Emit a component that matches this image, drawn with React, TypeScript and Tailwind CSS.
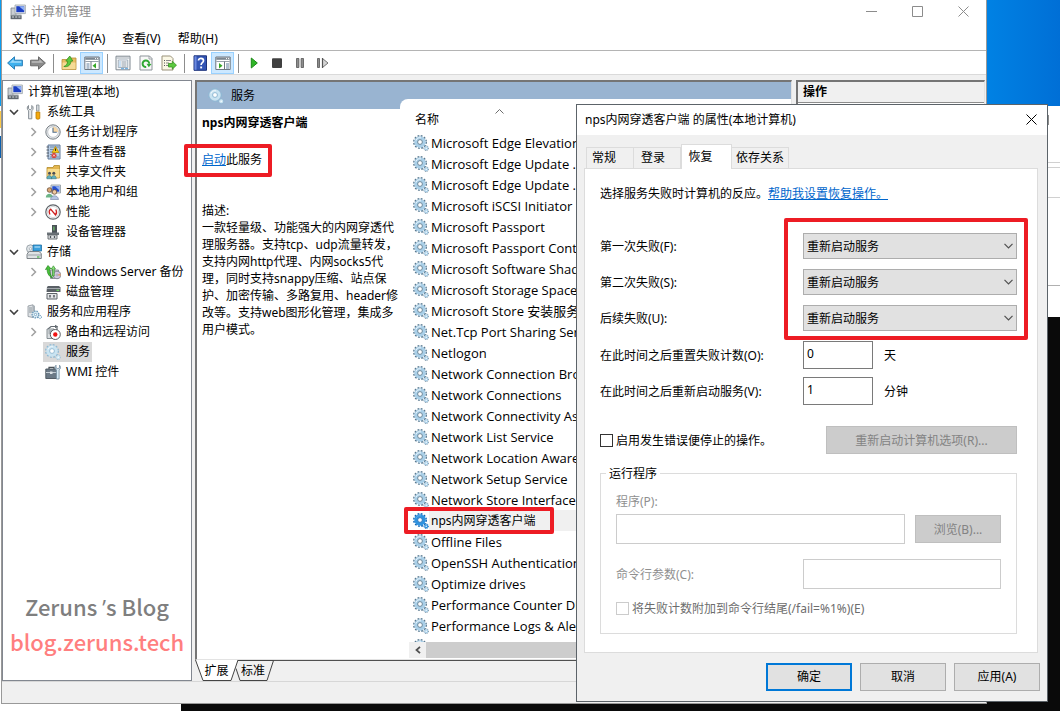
import type { ReactNode } from 'react'
import clsx from 'clsx'

const services = [
  'Microsoft Edge Elevation ...',
  'Microsoft Edge Update ...',
  'Microsoft Edge Update ...',
  'Microsoft iSCSI Initiator ...',
  'Microsoft Passport',
  'Microsoft Passport Cont...',
  'Microsoft Software Shad...',
  'Microsoft Storage Space...',
  'Microsoft Store 安装服务',
  'Net.Tcp Port Sharing Ser...',
  'Netlogon',
  'Network Connection Bro...',
  'Network Connections',
  'Network Connectivity Ass...',
  'Network List Service',
  'Network Location Aware...',
  'Network Setup Service',
  'Network Store Interface ...',
  'nps内网穿透客户端',
  'Offline Files',
  'OpenSSH Authentication ...',
  'Optimize drives',
  'Performance Counter DL...',
  'Performance Logs & Aler...',
  '',
]

const description = [
  '一款轻量级、功能强大的内网穿透代',
  '理服务器。支持tcp、udp流量转发，',
  '支持内网http代理、内网socks5代',
  '理，同时支持snappy压缩、站点保',
  '护、加密传输、多路复用、header修',
  '改等。支持web图形化管理，集成多',
  '用户模式。',
]

/* ---------- icons ---------- */

function Svg({ children, size = 16 }: { children: ReactNode; size?: number }) {
  return (
    <svg width={size} height={size} viewBox="0 0 16 16" fill="none" className="shrink-0" aria-hidden="true">
      {children}
    </svg>
  )
}

function GearIcon({ active = false, pale = false }: { active?: boolean; pale?: boolean }) {
  const edge = active ? '#0b62b4' : pale ? '#8db9d4' : '#58788f'
  const body = active ? '#2f93e0' : pale ? '#c9e4f2' : '#a9cfe8'
  return (
    <Svg>
      <circle cx="7" cy="7" r="6.2" stroke={edge} strokeWidth="1.500" strokeDasharray="1.800 1.446" />
      <circle cx="7" cy="7" r="4.100" stroke={body} strokeWidth="3.200" />
      <path d="M3 5.500A4.300 4.300 0 0 1 8 2.800" stroke="#fff" strokeWidth="1" strokeOpacity={active ? 0.2 : 0.7} />
      <circle cx="7" cy="7" r="2.400" fill="#fff" stroke={edge} strokeWidth=".9" />
      <circle cx="13.200" cy="13.200" r="2.300" stroke={edge} strokeWidth="1" strokeDasharray="1 .806" />
      <circle cx="13.200" cy="13.200" r="1.400" fill="#fff" stroke={body} strokeWidth="1.300" />
    </Svg>
  )
}

function ComputerIcon() {
  return (
    <Svg>
      <path d="M1 4h5v8H1z" fill="#c9ced3" stroke="#7b838a" strokeWidth=".8" />
      <path d="M5 1h10.400v8.600H5z" fill="#e4e7ea" stroke="#9aa3aa" strokeWidth=".8" />
      <path d="M6.300 2.200h7.900v6H6.300z" fill="#1b3fc4" />
      <path d="M9 2.200h5.200v4.600z" fill="#8fb0f5" />
      <path d="M2.500 10.500h9V12h-9z" fill="#a5acb2" />
      <path d="M.6 11.600h11v3.600H.6z" fill="#5f676e" />
      <path d="M2 13h2M5.200 13h2M8.400 13h2" stroke="#d8dde1" />
    </Svg>
  )
}

function ToolsIcon() {
  return (
    <Svg>
      <path d="M2.500 1.500v3l1.600 1.400L5.800 4.500V1.500C7.600 2.500 7.600 5.500 5.800 6.800v8h-3.200v-8C.8 5.500.8 2.500 2.500 1.500Z" fill="#e6e9eb" stroke="#7d858b" strokeWidth=".9" />
      <path d="M10.500 1h2.500v6h-2.500z" fill="#d5d9dc" stroke="#878f95" strokeWidth=".8" />
      <path d="M10 8h3.800v6.500c-1 .9-2.800.9-3.800 0z" fill="#f5a90d" stroke="#b97a00" strokeWidth=".8" />
    </Svg>
  )
}

function ClockIcon() {
  return (
    <Svg>
      <circle cx="8" cy="8" r="7.200" fill="#e3e6e8" stroke="#7a8187" strokeWidth="1" />
      <circle cx="8" cy="8" r="5.300" fill="#fff" stroke="#b3b9be" strokeWidth=".7" />
      <path d="M8 2.800A5.200 5.200 0 0 1 13.200 8H8z" fill="#f8d8a6" />
      <path d="M8 3.800V8.300h3.800" stroke="#4f6b87" strokeWidth="1.100" />
    </Svg>
  )
}

function EventIcon() {
  return (
    <Svg>
      <path d="M3 1h12v14H3z" fill="#b9cde4" stroke="#647d9b" />
      <path d="M5 3h9M5 5.500h4M5 8h3M5 10.500h3M5 13h9" stroke="#6f8cad" />
      <path d="M1.500 3h2.500M1.500 6h2.500M1.500 9h2.500M1.500 12h2.500" stroke="#555f6a" />
      <path d="m10.500 2.500 3.500 6H7z" fill="#f8c615" stroke="#b58600" strokeWidth=".7" />
      <path d="M10.500 4.500v2.400" stroke="#222" />
      <circle cx="9" cy="11.500" r="2.500" fill="#d83a32" />
      <path d="m8 10.500 2 2m0-2-2 2" stroke="#fff" strokeWidth=".8" />
    </Svg>
  )
}

function SharedFolderIcon() {
  return (
    <Svg>
      <path d="M2 3.500h6l1-2h5.500V14H2z" fill="#e3b64f" stroke="#b38a2a" strokeWidth=".8" />
      <path d="M2.500 5h12v8.600h-12z" fill="#f8dd8d" />
      <circle cx="4.500" cy="9.300" r="1.500" fill="#4a4f55" />
      <circle cx="8.800" cy="9.300" r="1.500" fill="#4a4f55" />
      <path d="M1.800 14.800c0-4.300 5-4.300 5 0zM6.300 14.800c0-4.300 5-4.300 5 0z" fill="#5fb0c0" stroke="#2f6f7d" strokeWidth=".5" />
    </Svg>
  )
}

function UsersIcon() {
  return (
    <Svg>
      <path d="M6 1h9.500v8H6z" fill="#dfe4e8" stroke="#8b959d" strokeWidth=".8" />
      <path d="M7.300 2.200h7v5.500h-7z" fill="#2550cf" />
      <path d="M10 2.200h4.300v4z" fill="#8fb0f5" />
      <circle cx="4.500" cy="6" r="2.300" fill="#d9a878" stroke="#5d4126" strokeWidth=".7" />
      <circle cx="9.500" cy="8" r="2.300" fill="#efc9a0" stroke="#5d4126" strokeWidth=".7" />
      <path d="M.8 13.500C1 8.500 7.500 8.500 8 13.500z" fill="#6cb587" />
      <path d="M5.500 15.500c.3-5 7.700-5 8 0z" fill="#b5c6e2" stroke="#5a6d93" strokeWidth=".5" />
    </Svg>
  )
}

function PerformanceIcon() {
  return (
    <Svg>
      <circle cx="8" cy="8" r="7.200" fill="#fff" stroke="#5f656a" strokeWidth="1.200" />
      <circle cx="8" cy="8" r="5.600" stroke="#d5d8da" />
      <path d="M5 10.500c-1.200-2.500-.8-4.500.6-5.300L10.500 11c1.200-1.500 1.300-3.700.3-5.500" stroke="#cf1f1f" strokeWidth="1.300" />
    </Svg>
  )
}

function DeviceIcon() {
  return (
    <Svg>
      <path d="M7 1h5v8H7z" fill="#4b5157" />
      <path d="M8.300 2.500h1.200v4H8.300z" fill="#6fc36b" />
      <path d="M2 8.500h12V11H2z" fill="#6b7278" />
      <path d="M3 11h9v4H3z" fill="#dfe2e4" stroke="#5d6368" strokeWidth=".9" />
      <path d="M5.500 12v2M9.500 12v2" stroke="#4b5157" strokeWidth="1.300" />
    </Svg>
  )
}

function StorageIcon() {
  return (
    <Svg>
      <circle cx="4.500" cy="4.800" r="4" fill="#dfe4e7" stroke="#8b959d" strokeWidth=".8" />
      <circle cx="4.500" cy="4.800" r="1.200" fill="#fff" stroke="#8b959d" strokeWidth=".6" />
      <path d="M7 1h8.500v6H7z" fill="#3aa0dd" stroke="#1f6fa5" strokeWidth=".8" />
      <path d="M8.500 3h5.500" stroke="#c8e8fa" />
      <path d="m2 8.500 1.500-1h9.500l2.300 2v5H1v-4z" fill="#dfe2e4" stroke="#70777d" strokeWidth=".9" />
      <path d="M1.500 11h13.500" stroke="#9aa1a7" />
      <path d="M11 13h2.500" stroke="#48b648" strokeWidth="1.200" />
    </Svg>
  )
}

function BackupIcon() {
  return (
    <Svg>
      <path d="M5.500 6h8v8.500h-8z" fill="#c8cdd1" stroke="#777f86" strokeWidth=".8" />
      <circle cx="12" cy="11" r="3.800" fill="#d7c9e6" stroke="#777f86" strokeWidth=".8" />
      <path d="M12 11 15.500 9.500 15.600 12z" fill="#e6a16a" />
      <circle cx="12" cy="11" r="1" fill="#fff" stroke="#666" strokeWidth=".5" />
      <path d="M7.500 14C3 12 2 8 2.200 5L.5 5.500 3 1.500l3 3.300-1.600.2c0 3 1 6 3.100 9Z" fill="#48c43a" stroke="#23821c" strokeWidth=".7" />
      <path d="M7.500 12V5L6.200 5 8.400 1.800 10.500 5H9.200v7z" fill="#8be07d" stroke="#23821c" strokeWidth=".6" />
    </Svg>
  )
}

function DiskIcon() {
  return (
    <Svg>
      <path d="m2 3 1-1h11l1.500 1.500V8H1.500z" fill="#5a6066" />
      <path d="M2 4.500h13" stroke="#a2a8ad" />
      <path d="M11.500 6.300h2.500" stroke="#6fe05e" strokeWidth="1.200" />
      <path d="M2 9.500h10V15H2z" fill="#e3e5e7" stroke="#5d6368" strokeWidth="1" />
      <path d="M5 11v2.500M9 11v2.500" stroke="#4b5157" strokeWidth="1.400" />
    </Svg>
  )
}

function AppsIcon() {
  return (
    <Svg>
      <path d="m2 2 5-1.200V13.500L2 12.500z" fill="#dfe3e6" stroke="#8a9299" strokeWidth=".8" />
      <path d="M7 .8 9 2v11l-2 .5z" fill="#aab2b8" />
      <path d="M3 4h3M3 6h3M3 8h3" stroke="#858d93" strokeWidth=".9" />
      <circle cx="9.500" cy="10.500" r="3.300" fill="#e6f3fa" stroke="#6a9aba" strokeWidth="1.500" strokeDasharray="1.400 .9" />
      <circle cx="9.500" cy="10.500" r="1.200" fill="#fff" stroke="#6a9aba" strokeWidth=".8" />
      <circle cx="14" cy="13" r="1.600" fill="#e6f3fa" stroke="#6a9aba" strokeDasharray="1 .7" />
    </Svg>
  )
}

function RoutingIcon() {
  return (
    <Svg>
      <path d="m3 5 3-2.500h6V6" stroke="#62696f" strokeWidth="1.200" />
      <path d="M2 5h7v9.500H2z" fill="#dadee1" stroke="#7b8389" strokeWidth=".9" />
      <path d="M3.500 7h4M3.500 9h3" stroke="#7b8389" />
      <path d="m10 .8 3 1.700-3 1.700z" fill="#62696f" />
      <circle cx="10.300" cy="10.500" r="5" fill="#fff" stroke="#4a4f54" strokeWidth=".9" />
      <circle cx="10.300" cy="10.500" r="2.200" fill="#f01414" />
    </Svg>
  )
}

function WmiIcon() {
  return (
    <Svg>
      <path d="M4 5V3.300h5V5" stroke="#495158" strokeWidth="1.200" />
      <path d="M.8 5h11l1.500 3v6.500H.8z" fill="#6c7a87" stroke="#48525b" strokeWidth=".9" />
      <path d="M1 8.500h11" stroke="#c5ced5" />
      <path d="M5 7.500h2.500v2.500H5z" fill="#dde3e7" />
      <path d="M11 1.200c-1.500 1.300-1.300 3.800.4 4.600V15h2.700V5.800c1.700-.8 1.900-3.300.4-4.600v2.600l-1.700.9L11 3.800z" fill="#d7eaf5" stroke="#6d8799" strokeWidth=".8" />
    </Svg>
  )
}

function BackIcon() {
  return (
    <Svg>
      <path d="M.6 8 7.500 1.800v3.400h7.900v5.600H7.500v3.400z" fill="#3eb1ee" stroke="#2b7fb8" />
      <path d="M2.800 7.800 6.600 4.300v2h7.700v1.500z" fill="#a3dcfa" />
    </Svg>
  )
}

function ForwardIcon() {
  return (
    <Svg>
      <path d="M15.400 8 8.500 1.800v3.400H.6v5.600h7.900v3.400z" fill="#8b8b8b" stroke="#6a6a6a" />
      <path d="M13.200 7.800 9.400 4.300v2H1.700v1.500z" fill="#bdbdbd" />
    </Svg>
  )
}

function UpFolderIcon() {
  return (
    <Svg>
      <path d="M1 4.500h5l1.500-1.500H15v11.500H1z" fill="#e8bd62" stroke="#b98f38" strokeWidth=".8" />
      <path d="M1.500 7.500h13v6.600h-13z" fill="#f6db96" />
      <path d="M2.800 11.500c2.400-.8 3.700-2.600 3.900-5.200L4.800 6 8.800 1l3 5-1.900.3c-.2 3.900-3 6-7.100 5.200Z" fill="#5cc93f" stroke="#2d8a1a" strokeWidth=".7" />
    </Svg>
  )
}

function PaneIcon({ flip = false }: { flip?: boolean }) {
  return (
    <Svg>
      <path d="M.8 2h14.400v12.500H.8z" fill="#fff" stroke="#6d7780" />
      <path d="M1.300 2.500h13.400v2.300H1.300z" fill="#7c8791" />
      <path d="M11 3.600h1M13 3.600h1" stroke="#fff" />
      <path d="M1.300 6.500h13.400" stroke="#9aa4ad" />
      {flip ? (
        <>
          <path d="M9.500 6.500v8" stroke="#6d7780" />
          <path d="M11 9h3M11 11h3M11 13h3" stroke="#60809f" />
          <path d="m4 8 3.500 2.700L4 13.500z" fill="#35a825" />
        </>
      ) : (
        <>
          <path d="M7 6.500v8" stroke="#6d7780" />
          <path d="M2.500 9h3M2.500 11h3M2.500 13h3" stroke="#60809f" />
          <path d="m12 8-3.500 2.700L12 13.500z" fill="#35a825" />
        </>
      )}
    </Svg>
  )
}

function PropertiesIcon() {
  return (
    <Svg>
      <path d="M1 1.200h14v13.600H1z" fill="#f5f6f7" stroke="#7f8890" />
      <path d="M1.500 3h13" stroke="#a6afb7" />
      <path d="M3.300 5h9.400v7.500H3.300z" fill="#fff" stroke="#8fa0af" strokeWidth=".8" />
      <path d="M4.500 7h1M4.500 9h1M4.500 11h1" stroke="#2f83cc" />
      <path d="M6.500 7H11.500M6.500 9h5M6.500 11h5" stroke="#8a97a3" />
      <path d="M6 13.700h3M10 13.700h3" stroke="#5ba3dd" />
    </Svg>
  )
}

function RefreshIcon() {
  return (
    <Svg>
      <path d="M2 1h9.500L14 3.500V15H2z" fill="#f8f8f8" stroke="#8e959b" />
      <path d="M11 1v3h3" stroke="#8e959b" strokeWidth=".8" />
      <path d="M8.200 12A3.300 3.300 0 1 1 11.200 8.800" stroke="#2fa833" strokeWidth="2" />
      <path d="m8.500 8.700 5 .2-2.700 3.400z" fill="#2fa833" />
    </Svg>
  )
}

function ExportIcon() {
  return (
    <Svg>
      <path d="M1 1h8.500L12 3.500V15H1z" fill="#fbf8e6" stroke="#9a927a" />
      <path d="M3 5.500h1M3 8h1M3 10.500h1" stroke="#555" />
      <path d="M5 5.500h5M5 8h3M5 10.500h3" stroke="#8b8b8b" />
      <path d="M7.500 8.500h3.800V6.200l4.200 4-4.200 4V12H7.500z" fill="#5cc93f" stroke="#2d8a1a" strokeWidth=".7" />
    </Svg>
  )
}

function HelpIcon() {
  return (
    <Svg>
      <path d="M2 .8h12.500v14.500H2z" fill="#3355b5" stroke="#1d337b" />
      <path d="M2.500 1.300h2v13.500h-2z" fill="#6d8ae0" />
      <path d="M6.500 5.600c0-3 5-3 5 .1 0 2-2.400 2-2.400 4.200" stroke="#fff" strokeWidth="1.700" />
      <path d="M8.200 11.500h1.900v1.900H8.200z" fill="#fff" />
    </Svg>
  )
}

function PlayIcon() {
  return (
    <Svg>
      <path d="m5.300 3 6 5-6 5z" fill="#2fb526" stroke="#1c8a17" />
    </Svg>
  )
}

function StopIcon() {
  return (
    <Svg>
      <rect x="3" y="3.200" width="10" height="9.800" rx="1" fill="#404040" />
    </Svg>
  )
}

function PauseIcon() {
  return (
    <Svg>
      <path d="M4.500 3.500h2.400v9H4.500zM9.100 3.500h2.400v9H9.100z" fill="#8c8c8c" stroke="#555" strokeWidth=".8" />
    </Svg>
  )
}

function RestartIcon() {
  return (
    <Svg>
      <path d="M2.500 3.500h2v9h-2z" fill="#8c8c8c" stroke="#555" strokeWidth=".8" />
      <path d="m7.500 3.500 5.500 4.500-5.500 4.500z" fill="#d4d4d4" stroke="#666" strokeWidth=".9" />
      <path d="M7.500 3v10" stroke="#555" strokeWidth="1.200" />
    </Svg>
  )
}

function CloseIcon({ className }: { className: string }) {
  return (
    <svg width="11" height="11" viewBox="0 0 11 11" className={className} aria-hidden="true">
      <path d="M.5.5l10 10m0-10-10 10" stroke="currentColor" />
    </svg>
  )
}

/* ---------- main window ---------- */

const menus = ['文件(F)', '操作(A)', '查看(V)', '帮助(H)']

function Separator() {
  return (
    <div className="flex h-[22px] w-2 items-center justify-center">
      <div className="h-[19px] w-px bg-[#8d8d8d]" />
    </div>
  )
}

function ToolButton({ label, on = false, children }: { label: string; on?: boolean; children: ReactNode }) {
  return (
    <button
      aria-label={label}
      className={clsx('flex h-[22px] w-[23px] items-center justify-center', on && 'border border-[#99d1ff] bg-[#cce8ff]')}
    >
      {children}
    </button>
  )
}

function Toolbar() {
  return (
    <div className="flex h-6 shrink-0 items-end border-b border-[#dadada] bg-white pl-px">
      <ToolButton label="后退"><BackIcon /></ToolButton>
      <ToolButton label="前进"><ForwardIcon /></ToolButton>
      <Separator />
      <ToolButton label="上一级"><UpFolderIcon /></ToolButton>
      <ToolButton label="控制台树" on><PaneIcon /></ToolButton>
      <Separator />
      <ToolButton label="属性"><PropertiesIcon /></ToolButton>
      <ToolButton label="刷新"><RefreshIcon /></ToolButton>
      <ToolButton label="导出列表"><ExportIcon /></ToolButton>
      <Separator />
      <ToolButton label="帮助"><HelpIcon /></ToolButton>
      <ToolButton label="操作窗格" on><PaneIcon flip /></ToolButton>
      <Separator />
      <ToolButton label="启动服务"><PlayIcon /></ToolButton>
      <ToolButton label="停止服务"><StopIcon /></ToolButton>
      <ToolButton label="暂停服务"><PauseIcon /></ToolButton>
      <ToolButton label="重启服务"><RestartIcon /></ToolButton>
    </div>
  )
}

interface Node {
  label: string
  icon: ReactNode
  level: 0 | 1 | 2
  state?: 'open' | 'closed'
  selected?: boolean
}

const tree: Node[] = [
  { label: '计算机管理(本地)', icon: <ComputerIcon />, level: 0 },
  { label: '系统工具', icon: <ToolsIcon />, level: 1, state: 'open' },
  { label: '任务计划程序', icon: <ClockIcon />, level: 2, state: 'closed' },
  { label: '事件查看器', icon: <EventIcon />, level: 2, state: 'closed' },
  { label: '共享文件夹', icon: <SharedFolderIcon />, level: 2, state: 'closed' },
  { label: '本地用户和组', icon: <UsersIcon />, level: 2, state: 'closed' },
  { label: '性能', icon: <PerformanceIcon />, level: 2, state: 'closed' },
  { label: '设备管理器', icon: <DeviceIcon />, level: 2 },
  { label: '存储', icon: <StorageIcon />, level: 1, state: 'open' },
  { label: 'Windows Server 备份', icon: <BackupIcon />, level: 2, state: 'closed' },
  { label: '磁盘管理', icon: <DiskIcon />, level: 2 },
  { label: '服务和应用程序', icon: <AppsIcon />, level: 1, state: 'open' },
  { label: '路由和远程访问', icon: <RoutingIcon />, level: 2, state: 'closed' },
  { label: '服务', icon: <GearIcon pale />, level: 2, selected: true },
  { label: 'WMI 控件', icon: <WmiIcon />, level: 2 },
]

function TreeRow({ node }: { node: Node }) {
  return (
    <li className={clsx('flex h-5 items-center', node.level === 0 && 'pl-[2px]', node.level === 1 && 'pl-1', node.level === 2 && 'pl-[23px]')}>
      {node.level > 0 && (
        <span className="mr-[3px] flex w-[14px] justify-center">
          {node.state === 'open' && (
            <svg width="10" height="7" viewBox="0 0 10 7" fill="none"><path d="m1 1 4 4 4-4" stroke="#404040" strokeWidth="1.600" /></svg>
          )}
          {node.state === 'closed' && (
            <svg width="7" height="10" viewBox="0 0 7 10" fill="none"><path d="m1.500 1 4 4-4 4" stroke="#a0a0a0" strokeWidth="1.500" /></svg>
          )}
        </span>
      )}
      <span className={clsx('flex h-5 items-center gap-[5px] px-[2px] whitespace-nowrap', node.selected && 'bg-[#d9d9d9]')}>
        {node.icon}
        {node.label}
      </span>
    </li>
  )
}

function TreePanel() {
  return (
    <nav className="flex w-[190px] shrink-0 flex-col justify-between overflow-hidden border border-[#828790] bg-white">
      <ul className="pt-px">
        {tree.map(node => <TreeRow key={node.label} node={node} />)}
      </ul>
      <div className="pb-[22px] text-center font-['Noto_Sans_CJK_SC',sans-serif] text-[22px] leading-[34px] font-medium">
        <p className="text-[#7f7f7f]">Zeruns <span className="font-['Open_Sans']">’</span>s Blog</p>
        <p className="text-[#ff7f7f]">blog.zeruns.tech</p>
      </div>
    </nav>
  )
}

function ServiceInfo() {
  return (
    <section className="w-[203px] shrink-0">
      <h2 className="flex h-[27px] items-center gap-[7px] bg-[#99b4d1] pl-[11px]">
        <GearIcon pale />
        服务
      </h2>
      <div className="pt-[5px] pl-[5px] leading-[17px] whitespace-nowrap">
        <h3 className="font-bold">nps内网穿透客户端</h3>
        <p className="relative mt-5">
          <a href="#start" className="text-[#0066cc] underline">启动</a>此服务
          <span className="absolute -top-[7px] -left-[18px] h-[33px] w-[88px] rounded-xs border-4 border-[#ed1c24]" />
        </p>
        <p className="mt-[34px]">描述:</p>
        {description.map(line => <p key={line}>{line}</p>)}
      </div>
    </section>
  )
}

function ServiceList() {
  return (
    <section className="flex min-w-0 flex-1 flex-col bg-[#99b4d1] pt-[17px]">
      <div className="flex min-h-0 flex-1 flex-col rounded-tl-lg bg-white pb-px">
        <div className="relative flex h-[33px] shrink-0 items-center pt-[9px] pl-[15px]">
          名称
          <svg width="9" height="5" viewBox="0 0 9 5" fill="none" className="absolute top-[10px] left-[95px]">
            <path d="m.5 4.500 4-4 4 4" stroke="#6d6d6d" />
          </svg>
        </div>
        <ul className="min-h-0 flex-1 overflow-hidden pl-[13px]">
          {services.map((name, i) => {
            const picked = name.startsWith('nps')
            return (
              <li key={i} className="relative flex h-[21px] items-center">
                <GearIcon active={picked} />
                <span
                  className={clsx(
                    'flex h-[21px] flex-1 items-center pl-[2px] whitespace-nowrap',
                    picked ? 'bg-[#f0f0f0]' : "font-['Open_Sans','Noto_Sans_CJK_SC',sans-serif] text-[13px]",
                  )}
                >
                  {name}
                </span>
                {picked && <span className="absolute -top-[3px] -left-[9px] h-[27px] w-[150px] rounded-xs border-4 border-[#ed1c24]" />}
              </li>
            )
          })}
        </ul>
        <div className="ml-[9px] flex h-4 shrink-0 bg-[#cdcdcd]">
          <button aria-label="向左滚动" className="flex w-[17px] items-center justify-center bg-[#f0f0f0]">
            <svg width="6" height="8" viewBox="0 0 6 8" fill="none"><path d="M5 .8 1.500 4 5 7.200" stroke="#505050" strokeWidth="1.800" /></svg>
          </button>
        </div>
      </div>
    </section>
  )
}

function ViewTabs() {
  return (
    <div className="flex h-[21px] shrink-0">
      <button className="relative z-10 w-10 pl-[3px]">
        <svg width="44" height="21" viewBox="0 0 44 21" fill="none" className="absolute top-0 left-0">
          <path d="M.5 0 8 20.500h28L43 0" fill="#fff" stroke="#444" />
        </svg>
        <span className="relative">扩展</span>
      </button>
      <button className="relative w-[38px] pr-[2px]">
        <svg width="39" height="21" viewBox="0 0 39 21" fill="none" className="absolute top-0 left-0">
          <path d="M1 8.500 5 20.500h27L38.500.5H3" stroke="#444" />
        </svg>
        <span className="relative">标准</span>
      </button>
      <div className="flex-1 border-t border-[#505050]" />
    </div>
  )
}

function MainWindow() {
  return (
    <div className="absolute top-0 right-[73px] bottom-[7px] left-px flex flex-col border-r border-b border-l border-[#999] bg-[#f0f0f0]">
      <div className="flex h-[51px] shrink-0 flex-col border-b border-[#b4b4b4] bg-white">
        <div className="flex h-[23px] items-center pr-[17px] pl-2 text-[#8c8c8c]">
          <ComputerIcon />
          <h1 className="flex-1 pl-[5px]">计算机管理</h1>
          <div className="flex items-center gap-[35px]">
            <button aria-label="最小化"><svg width="11" height="11" viewBox="0 0 11 11"><path d="M0 5.500h11" stroke="#8c8c8c" /></svg></button>
            <button aria-label="最大化"><svg width="11" height="11" viewBox="0 0 11 11" fill="none"><path d="M.5.5h10v10H.5z" stroke="#8c8c8c" /></svg></button>
            <button aria-label="关闭"><CloseIcon className="text-[#8c8c8c]" /></button>
          </div>
        </div>
        <div className="flex flex-1 items-center gap-[17px] pt-1 pl-[10px]">
          {menus.map(menu => <button key={menu}>{menu}</button>)}
        </div>
      </div>
      <Toolbar />
      <div className="flex min-h-0 flex-1 pt-[5px] pr-px">
        <TreePanel />
        <div className="ml-[3px] flex min-w-0 flex-1 flex-col">
          <div className="flex min-h-0 flex-1 border-t-2 border-r border-b border-l-2 border-t-[#757575] border-r-[#e3e3e3] border-b-[#e3e3e3] border-l-[#757575] bg-white">
            <ServiceInfo />
            <ServiceList />
          </div>
          <ViewTabs />
        </div>
        <aside className="ml-1 w-[189px] shrink-0 border-t-2 border-r border-l-2 border-[#757575] border-r-[#e3e3e3] bg-white">
          <h2 className="flex h-[21px] items-center border-b border-[#8c8c8c] bg-[#f0f0f0] pl-[5px] font-bold">操作</h2>
        </aside>
      </div>
      <div className="h-[22px] shrink-0 border-t border-[#d7d7d7]" />
    </div>
  )
}

/* ---------- properties dialog ---------- */

const failures = [
  { id: 'first', label: '第一次失败(F):' },
  { id: 'second', label: '第二次失败(S):' },
  { id: 'later', label: '后续失败(U):' },
]

const counters = [
  { id: 'reset', label: '在此时间之后重置失败计数(O):', value: '0', unit: '天' },
  { id: 'restart', label: '在此时间之后重新启动服务(V):', value: '1', unit: '分钟' },
]

function DialogButton({ primary = false, children }: { primary?: boolean; children: ReactNode }) {
  return (
    <button className={clsx('h-7 w-[86px] bg-[#e1e1e1]', primary ? 'border-2 border-[#0078d7]' : 'border border-[#adadad]')}>
      {children}
    </button>
  )
}

function RecoveryPage() {
  return (
    <div className="mr-[9px] ml-[7px] border border-[#dcdcdc] bg-white pt-4 pr-5 pb-[18px] pl-[15px] leading-[17px] whitespace-nowrap">
      <p>
        选择服务失败时计算机的反应。
        <a href="#help" className="text-[#0066cc] underline">帮助我设置恢复操作。</a>
      </p>

      <div className="relative mt-[26px]">
        {failures.map(({ id, label }) => (
          <div key={id} className="flex h-9 items-center">
            <label htmlFor={id} className="w-[203px] shrink-0">{label}</label>
            <div className="relative flex-1">
              <select id={id} className="block h-[26px] w-full appearance-none border border-[#adadad] bg-[#e1e1e1] px-[3px]">
                <option>重新启动服务</option>
              </select>
              <svg width="9" height="6" viewBox="0 0 9 6" fill="none" className="pointer-events-none absolute top-[10px] right-1">
                <path d="m.5.800 4 4 4-4" stroke="#505050" strokeWidth="1.200" />
              </svg>
            </div>
          </div>
        ))}
        <span className="pointer-events-none absolute -top-[10px] -right-[11px] -bottom-1 left-[184px] rounded-xs border-4 border-[#ed1c24]" />
      </div>
      {counters.map(({ id, label, value, unit }) => (
        <div key={id} className="flex h-9 items-center pt-[2px]">
          <label htmlFor={id} className="w-[203px] shrink-0">{label}</label>
          <input id={id} type="text" defaultValue={value} className="h-7 w-[70px] border border-[#7a7a7a] px-[3px] pb-1" />
          <span className="pl-[11px]">{unit}</span>
        </div>
      ))}

      <div className="mt-[18px] flex items-center justify-between">
        <label className="flex items-center gap-[3px]">
          <input type="checkbox" className="size-[13px] appearance-none border border-[#333] bg-white" />
          启用发生错误便停止的操作。
        </label>
        <button disabled className="h-7 w-[191px] border border-[#bfbfbf] bg-[#cccccc] text-[#838383]">重新启动计算机选项(R)...</button>
      </div>

      <fieldset className="mt-[11px] border border-[#dcdcdc] px-[15px] pb-4 text-[#8f8f8f]">
        <legend className="-ml-[10px] px-[3px] text-black">运行程序</legend>
        <label htmlFor="program" className="mt-[11px] block">程序(P):</label>
        <div className="mt-1 flex items-center gap-[10px]">
          <input id="program" type="text" disabled className="h-[30px] min-w-0 flex-1 border border-[#cccccc]" />
          <button disabled className="h-7 w-[86px] border border-[#bfbfbf] bg-[#cccccc] text-[#838383]">浏览(B)...</button>
        </div>
        <div className="mt-[15px] flex items-center">
          <label htmlFor="args" className="w-[187px] shrink-0">命令行参数(C):</label>
          <input id="args" type="text" disabled className="h-[30px] min-w-0 flex-1 border border-[#cccccc]" />
        </div>
        <label className="mt-[11px] flex items-center gap-[3px] text-[#6d6d6d]">
          <input type="checkbox" disabled className="size-[13px] appearance-none border border-[#cccccc] bg-white" />
          将失败计数附加到命令行结尾(/fail=%1%)(E)
        </label>
      </fieldset>
    </div>
  )
}

function DialogTabs() {
  return (
    <div role="tablist" className="relative -mb-px flex items-end pl-[9px]">
      <button role="tab" className="h-[22px] w-12 border border-[#dcdcdc] pr-3">常规</button>
      <button role="tab" className="-ml-px h-[22px] w-12 border border-[#dcdcdc] pr-2">登录</button>
      <button role="tab" aria-selected="true" className="h-[25px] w-[51px] border border-b-0 border-[#dcdcdc] bg-white pr-3">恢复</button>
      <button role="tab" className="-ml-px h-[22px] w-[58px] border border-[#dcdcdc]">依存关系</button>
    </div>
  )
}

function PropertiesDialog() {
  return (
    <div role="dialog" aria-labelledby="dialog-title" className="absolute top-[104px] right-3 w-[472px] border border-[#5c6369] bg-[#f0f0f0]">
      <div className="flex h-[30px] items-center justify-between bg-white pr-[10px] pb-px pl-2">
        <h2 id="dialog-title">nps内网穿透客户端 的属性(本地计算机)</h2>
        <button aria-label="关闭"><CloseIcon className="text-black" /></button>
      </div>
      <div className="pt-[9px]">
        <DialogTabs />
        <RecoveryPage />
      </div>
      <div className="flex justify-end gap-2 pt-[10px] pr-[7px] pb-[10px]">
        <DialogButton primary>确定</DialogButton>
        <DialogButton>取消</DialogButton>
        <DialogButton>应用(A)</DialogButton>
      </div>
    </div>
  )
}

/* ---------- desktop ---------- */

function Desktop() {
  return (
    <div className="flex h-full flex-col">
      <div className="h-[106px] shrink-0 bg-linear-to-r from-[#0a9cf0] via-[#0082e4] via-93% to-[#006fd6]" />
      <div className="flex h-[211px] shrink-0 justify-between bg-white">
        <div className="w-1 pt-[5px]">
          <div className="h-[17px] bg-[#fbc948]" />
          <div className="mt-2 h-[22px] bg-[#0a5fae]" />
        </div>
        <div className="w-3">
          <div className="mt-[9px] h-[10px] w-px bg-[#8c8c8c]" />
          <div className="mt-[37px] h-[6px] border-y border-[#d0d0d0]" />
          <div className="mt-[29px] border-t border-[#d0d0d0]" />
          <div className="mt-[87px] border-t border-[#b0b0b0]" />
        </div>
      </div>
      <div className="flex flex-1 bg-[#0a0a0a]">
        <div className="w-[181px] bg-white" />
      </div>
    </div>
  )
}

export default function App() {
  return (
    <div className="relative h-screen overflow-hidden font-['Noto_Sans','Noto_Sans_CJK_SC',sans-serif] text-[12px] leading-4 text-black">
      <Desktop />
      <MainWindow />
      <PropertiesDialog />
    </div>
  )
}
